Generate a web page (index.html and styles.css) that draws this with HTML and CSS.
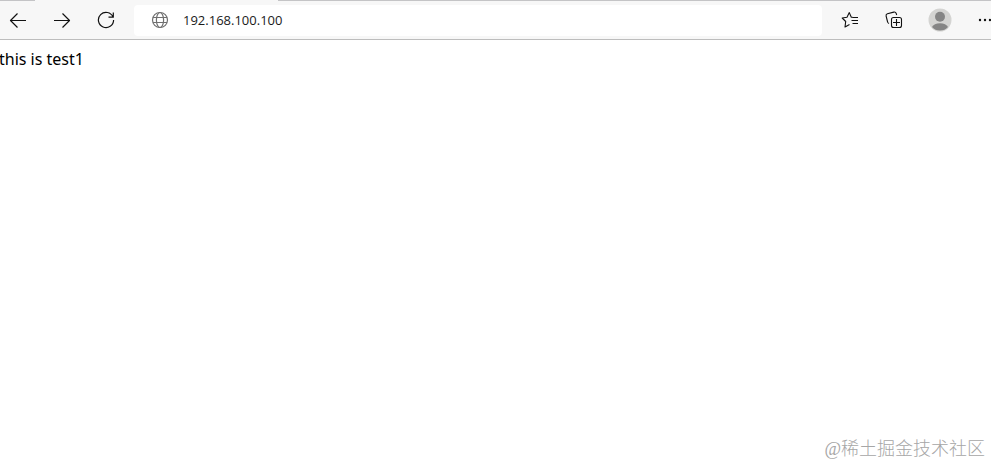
FILE: index.html
```html
<!DOCTYPE html>
<html lang="zh-CN">
<head>
<meta charset="utf-8">
<title>192.168.100.100</title>
<link rel="stylesheet" href="styles.css">
</head>
<body>
<header class="browser">
  <div class="tabs"><span class="tab"></span></div>
  <nav class="toolbar" aria-label="Browser">
    <div class="group">
      <button class="tool" type="button" aria-label="Back"><svg width="18" height="18" viewBox="0 0 18 18"><path d="M17 9.500H1.500M8.500 2.500L1.500 9.500L8.500 16.500"/></svg></button>
      <button class="tool" type="button" aria-label="Forward"><svg width="18" height="18" viewBox="0 0 18 18"><path d="M1 9.500H16.500M9.500 2.500L16.500 9.500L9.500 16.500"/></svg></button>
      <button class="tool" type="button" aria-label="Refresh"><svg width="18" height="18" viewBox="0 0 18 18"><path d="M16 6A7.600 7.600 0 1 0 16.600 9M16.300 1.500V6.200H11.500"/></svg></button>
    </div>
    <label class="address">
      <svg class="globe" width="18" height="18" viewBox="0 0 18 18"><circle cx="9" cy="9" r="7.500"/><ellipse cx="9" cy="9" rx="3.600" ry="7.500"/><path d="M2 6.500H16M2 11.500H16"/></svg>
      <input class="url" type="text" value="192.168.100.100" aria-label="Address" spellcheck="false">
    </label>
    <div class="group">
      <button class="tool" type="button" aria-label="Favorites"><svg class="fine" width="18" height="18" viewBox="0 0 18 18"><path d="M11.500 6.300L10.300 6.200L8.300 1.600L6 6.200L1.200 7L4.700 10.500L4 16L8.500 13.600M11.500 6.500H17M10.500 9.500H17M11.500 12.500H17"/></svg></button>
      <button class="tool" type="button" aria-label="Collections"><svg class="fine" width="18" height="18" viewBox="0 0 18 18"><path d="M4 12.500Q2.800 12 2.600 11L1.100 5Q.8 3.300 2.400 2.800L8.800 1.100Q10.500 .7 11.100 2.200L11.700 4"/><rect x="6.500" y="6.500" width="10" height="10" rx="2"/><path d="M11.500 8V15M8 11.500H15"/></svg></button>
    </div>
    <div class="group">
      <button class="tool" type="button" aria-label="Profile"><svg class="avatar" width="24" height="24" viewBox="0 0 24 24"><circle class="disc" cx="12" cy="12" r="11.500"/><circle cx="12" cy="8.700" r="5"/><path d="M4 19Q6 15.200 12 15.200Q18 15.200 20 19Q17 22.500 12 22.500Q7 22.500 4 19Z"/></svg></button>
      <button class="tool more" type="button" aria-label="Settings and more"><svg class="dots" width="14" height="18" viewBox="0 0 14 18"><circle cx="2" cy="9" r="1.200"/><circle cx="7" cy="9" r="1.200"/><circle cx="12" cy="9" r="1.200"/></svg></button>
    </div>
  </nav>
</header>
<main class="page">this is test1</main>
<footer class="watermark">@稀土掘金技术社区</footer>
</body>
</html>
```
FILE: styles.css
```css
* {
  box-sizing: border-box;
}

body {
  display: flex;
  flex-direction: column;
  min-height: 100vh;
  margin: 0;
  overflow-x: hidden;
  background: #fff;
  color: #000;
  font-family: "Noto Sans", "Noto Sans CJK SC", sans-serif;
}

.browser {
  background: #f7f7f7;
  border-bottom: 1px solid #bdbdbd;
}

.tabs {
  height: 1px;
  padding-left: 35px;
  background: #c4c4c6;
}

.tab {
  display: block;
  width: 243px;
  height: 1px;
  background: #f7f7f7;
}

.toolbar {
  display: flex;
  align-items: center;
  gap: 10px;
  height: 38px;
}

.group {
  display: flex;
  gap: 8px;
}

.tool {
  display: flex;
  align-items: center;
  justify-content: center;
  width: 36px;
  height: 30px;
  padding: 0;
  border: 0;
  background: none;
}

.more {
  justify-content: flex-start;
  width: 25px;
  padding-left: 12px;
  overflow: hidden;
}

svg {
  flex: none;
  fill: none;
  stroke: #111;
  stroke-width: 1.2;
  stroke-linejoin: round;
}

.fine {
  stroke-width: 1.1;
}

.globe {
  stroke: #707070;
}

.avatar {
  fill: #858585;
  stroke: none;
}

.disc {
  fill: #d4d4d2;
}

.dots {
  fill: #111;
  stroke: none;
}

.address {
  display: flex;
  flex: 1;
  align-items: center;
  gap: 14px;
  min-width: 0;
  height: 31px;
  padding: 0 17px;
  border-radius: 4px;
  background: #fff;
}

.url {
  flex: 1;
  min-width: 0;
  padding: 0;
  border: 0;
  outline: 0;
  background: none;
  color: #1a1a1a;
  font-family: "Open Sans", sans-serif;
  font-size: 13px;
}

.page {
  flex: 1;
  margin-left: -1px;
  padding-top: 7px;
  font-size: 16px;
  line-height: 24px;
}

.watermark {
  padding: 0 6px 4px;
  color: #a6a6a6;
  font-family: "Liberation Serif", "Noto Sans CJK SC", serif;
  font-weight: 300;
  font-size: 18px;
  line-height: 24px;
  text-align: right;
}
```
